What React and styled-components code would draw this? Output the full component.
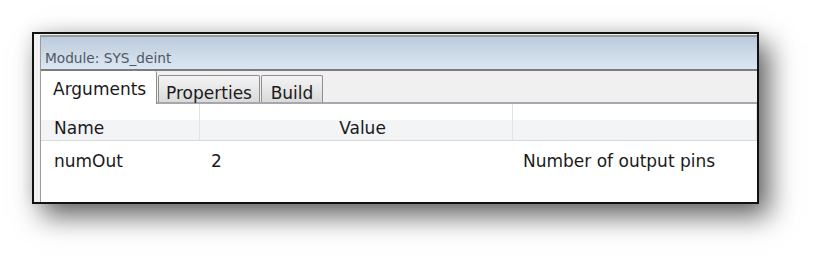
import styled, { createGlobalStyle } from 'styled-components';

const GlobalStyle = createGlobalStyle`
  html, body {
    margin: 0;
    padding: 0;
    background: #ffffff;
  }
  body {
    font-family: "DejaVu Sans", "Liberation Sans", sans-serif;
    color: #1a1a1a;
  }
`;

const Page = styled.div`
  width: 823px;
  height: 269px;
  padding: 32px 0 0 32px;
  box-sizing: border-box;
`;

const Window = styled.div`
  width: 727px;
  height: 172px;
  box-sizing: border-box;
  border: 2px solid #111;
  background: #f2f2f2;
  padding-top: 1px;
  display: flex;
  box-shadow: 10px 12px 26px rgba(0, 0, 0, 0.62), -2px -3px 14px rgba(0, 0, 0, 0.07);
`;

const LeftRail = styled.div`
  width: 6px;
  flex-shrink: 0;
  border-right: 1px solid #9c9c9c;
`;

const Panel = styled.div`
  flex: 1;
  display: flex;
  flex-direction: column;
  border-top: 2px solid #9a9a9a;
  background: #fff;
`;

const TitleBar = styled.div`
  height: 34px;
  box-sizing: border-box;
  padding: 13px 0 0 4px;
  background: linear-gradient(#bccbda, #dbe7f4);
  border-bottom: 2px solid #7b7b7b;
  font-size: 13.7px;
  line-height: 16px;
  color: #4f5864;
`;

const TabStrip = styled.div`
  height: 33px;
  box-sizing: border-box;
  display: flex;
  align-items: flex-end;
  gap: 1px;
  background: #f0f0f0;
  border-bottom: 2px solid #a4a8ae;
`;

const Tab = styled.div`
  width: ${p => p.$w}px;
  box-sizing: border-box;
  height: ${p => (p.$active ? 33 : 27)}px;
  margin-bottom: ${p => (p.$active ? -2 : 0)}px;
  padding-top: ${p => (p.$active ? 8 : 7)}px;
  text-align: ${p => (p.$active ? 'left' : 'center')};
  padding-left: ${p => (p.$active ? 12 : 0)}px;
  font-size: 17px;
  line-height: 20px;
  color: #1a1a1a;
  background: ${p => (p.$active ? '#fff' : 'linear-gradient(#f4f4f4, #dadada)')};
  border: 1px solid #8e8e8e;
  border-left-width: ${p => (p.$active ? 0 : 1)}px;
  border-bottom: none;
  border-top: ${p => (p.$active ? 'none' : '1px solid #8e8e8e')};
  border-radius: 2px 2px 0 0;
  position: relative;
  z-index: ${p => (p.$active ? 1 : 0)};
`;

const Grid = styled.div`
  display: grid;
  grid-template-columns: 159px 313px 1fr;
`;

const HeaderCell = styled.div`
  height: 37px;
  box-sizing: border-box;
  padding: 14px 0 0 13px;
  font-size: 17px;
  line-height: 20px;
  text-align: ${p => (p.$center ? 'center' : 'left')};
  background: linear-gradient(#ffffff 0 45%, #f3f4f6 45% 100%);
  border-right: 1px solid #e2e3e5;
  border-bottom: 1px solid #d8d9db;
  &:last-child {
    border-right: none;
  }
`;

const Cell = styled.div`
  padding: 10px 0 0 ${p => p.$pad}px;
  font-size: 17px;
  line-height: 20px;
`;

const tabs = [
  { label: 'Arguments', w: 116, active: true },
  { label: 'Properties', w: 102 },
  { label: 'Build', w: 62 },
];

export default function App() {
  return (
    <Page>
      <GlobalStyle />
      <Window>
        <LeftRail />
        <Panel>
          <TitleBar>Module: SYS_deint</TitleBar>
          <TabStrip>
            {tabs.map(t => (
              <Tab key={t.label} $w={t.w} $active={t.active}>{t.label}</Tab>
            ))}
          </TabStrip>
          <Grid>
            <HeaderCell>Name</HeaderCell>
            <HeaderCell $center>Value</HeaderCell>
            <HeaderCell />
            <Cell $pad={13}>numOut</Cell>
            <Cell $pad={11}>2</Cell>
            <Cell $pad={10}>Number of output pins</Cell>
          </Grid>
        </Panel>
      </Window>
    </Page>
  );
}
